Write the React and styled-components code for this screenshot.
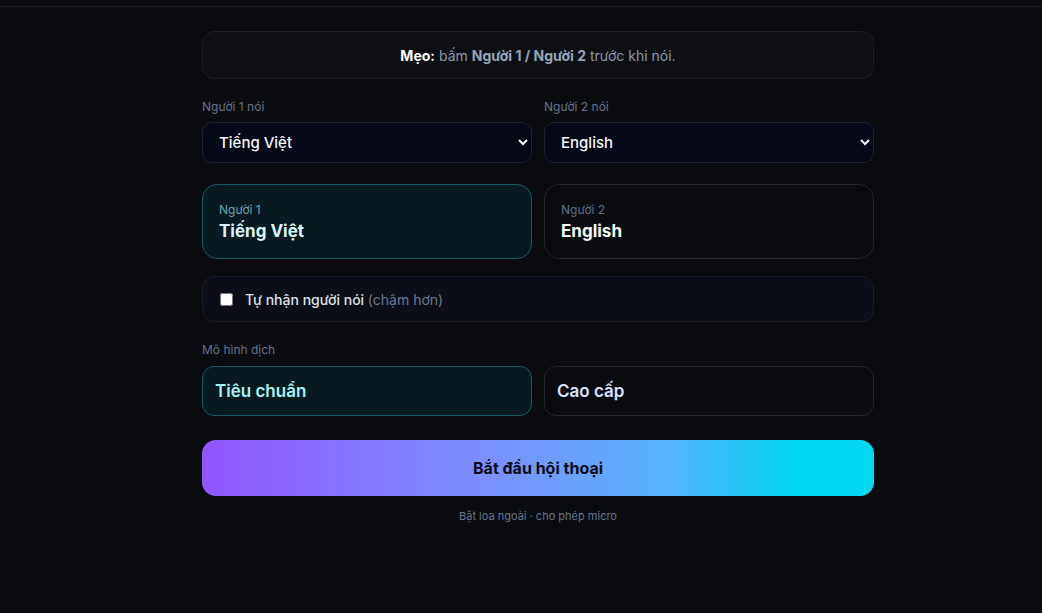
import React, { useState } from "react";
import styled, { createGlobalStyle, css } from "styled-components";

const GlobalStyle = createGlobalStyle`
  html, body {
    margin: 0;
    padding: 0;
    background: #0a0b0f;
    color: #e5e7eb;
    font-family: Inter, "Noto Sans", sans-serif;
  }
  * { box-sizing: border-box; }
`;

const Page = styled.div`
  min-height: 613px;
  background: #0a0b0f;
`;

const TopBar = styled.div`
  height: 7px;
  border-bottom: 1px solid #1c1d23;
`;

const Body = styled.div`
  padding-left: 34px;
`;

const Main = styled.main`
  width: 672px;
  margin: 0 auto;
  padding-top: 24px;
  display: flex;
  flex-direction: column;
`;

const Tip = styled.div`
  height: 48px;
  border: 1px solid #1d1f25;
  background: #0e0f13;
  border-radius: 12px;
  display: flex;
  align-items: center;
  justify-content: center;
  font-size: 14px;
  color: #8b98ad;

  b {
    font-weight: 700;
    color: #94a3b8;
  }
  b.lead {
    color: #ffffff;
  }
`;

const Grid = styled.div`
  display: grid;
  grid-template-columns: 1fr 1fr;
  gap: 12px;
  margin-top: ${(p) => p.$mt || 0}px;
`;

const Field = styled.label`
  display: flex;
  flex-direction: column;
  gap: 8px;
`;

const Label = styled.span`
  font-size: 12px;
  color: #66758c;
  line-height: 15px;
`;

const Select = styled.select`
  height: 41px;
  background: #050816;
  border: 1px solid #1c2133;
  border-radius: 10px;
  color: #f5f7fa;
  font-family: inherit;
  font-size: 15px;
  font-weight: 500;
  padding: 0 10px 0 12px;
  outline: none;
`;

const Speaker = styled.button`
  height: 75px;
  text-align: left;
  border-radius: 15px;
  padding: 0 16px;
  display: flex;
  flex-direction: column;
  justify-content: center;
  gap: 4px;
  font-family: inherit;
  cursor: pointer;
  ${(p) =>
    p.$active
      ? css`
          background: #061a20;
          border: 1px solid #135c66;
        `
      : css`
          background: #0a0b0f;
          border: 1px solid #25272d;
        `}
`;

const SpeakerLabel = styled.span`
  font-size: 12px;
  color: ${(p) => (p.$active ? "#6fa3ad" : "#5f6f86")};
`;

const SpeakerLang = styled.span`
  font-size: 17px;
  font-weight: 700;
  color: ${(p) => (p.$active ? "#d8f6ff" : "#f8fafc")};
`;

const CheckRow = styled.label`
  margin-top: 17px;
  height: 46px;
  background: #0b0e16;
  border: 1px solid #1a1d27;
  border-radius: 12px;
  display: flex;
  align-items: center;
  gap: 12px;
  padding: 0 17px;
  font-size: 14px;
  font-weight: 500;
  color: #dde2ea;
  cursor: pointer;

  input {
    margin: 0;
    width: 13px;
    height: 13px;
  }
  em {
    font-style: normal;
    font-weight: 400;
    color: #6b7a92;
  }
`;

const ModelField = styled.div`
  margin-top: 20px;
  display: flex;
  flex-direction: column;
  gap: 9px;
`;

const ModelBtn = styled.button`
  height: 50px;
  border-radius: 12px;
  text-align: left;
  padding: 0 12px;
  font-family: inherit;
  font-size: 17px;
  font-weight: 600;
  cursor: pointer;
  ${(p) =>
    p.$active
      ? css`
          background: #061a20;
          border: 1px solid #135c66;
          color: #a5f3fc;
        `
      : css`
          background: #0a0b0f;
          border: 1px solid #25272d;
          color: #dbe2ff;
        `}
`;

const StartBtn = styled.button`
  margin-top: 24px;
  height: 56px;
  border: none;
  border-radius: 14px;
  background: linear-gradient(90deg, #9055ff 0%, #7d8dff 40%, #55b4fb 70%, #00d4f0 88%, #00d8f0 100%);
  color: #0b0b16;
  font-family: inherit;
  font-size: 16px;
  font-weight: 700;
  cursor: pointer;
`;

const Footnote = styled.p`
  margin: 13px 0 0;
  text-align: center;
  font-size: 11px;
  color: #66758c;
`;

export default function App() {
  const [speaker, setSpeaker] = useState(1);
  const [model, setModel] = useState("std");
  const [lang1, setLang1] = useState("vi");
  const [lang2, setLang2] = useState("en");
  const names = { vi: "Tiếng Việt", en: "English" };

  return (
    <Page>
      <GlobalStyle />
      <TopBar />
      <Body>
        <Main>
          <Tip>
            <span>
              <b className="lead">Mẹo:</b> bấm <b>Người 1 / Người 2</b> trước khi nói.
            </span>
          </Tip>

          <Grid $mt={20}>
            <Field>
              <Label>Người 1 nói</Label>
              <Select value={lang1} onChange={(e) => setLang1(e.target.value)}>
                <option value="vi">Tiếng Việt</option>
                <option value="en">English</option>
              </Select>
            </Field>
            <Field>
              <Label>Người 2 nói</Label>
              <Select value={lang2} onChange={(e) => setLang2(e.target.value)}>
                <option value="vi">Tiếng Việt</option>
                <option value="en">English</option>
              </Select>
            </Field>
          </Grid>

          <Grid $mt={21}>
            <Speaker $active={speaker === 1} onClick={() => setSpeaker(1)}>
              <SpeakerLabel $active={speaker === 1}>Người 1</SpeakerLabel>
              <SpeakerLang $active={speaker === 1}>{names[lang1]}</SpeakerLang>
            </Speaker>
            <Speaker $active={speaker === 2} onClick={() => setSpeaker(2)}>
              <SpeakerLabel $active={speaker === 2}>Người 2</SpeakerLabel>
              <SpeakerLang $active={speaker === 2}>{names[lang2]}</SpeakerLang>
            </Speaker>
          </Grid>

          <CheckRow>
            <input type="checkbox" />
            <span>
              Tự nhận người nói <em>(chậm hơn)</em>
            </span>
          </CheckRow>

          <ModelField>
            <Label>Mô hình dịch</Label>
            <Grid>
              <ModelBtn $active={model === "std"} onClick={() => setModel("std")}>
                Tiêu chuẩn
              </ModelBtn>
              <ModelBtn $active={model === "pro"} onClick={() => setModel("pro")}>
                Cao cấp
              </ModelBtn>
            </Grid>
          </ModelField>

          <StartBtn>Bắt đầu hội thoại</StartBtn>
          <Footnote>Bật loa ngoài · cho phép micro</Footnote>
        </Main>
      </Body>
    </Page>
  );
}
